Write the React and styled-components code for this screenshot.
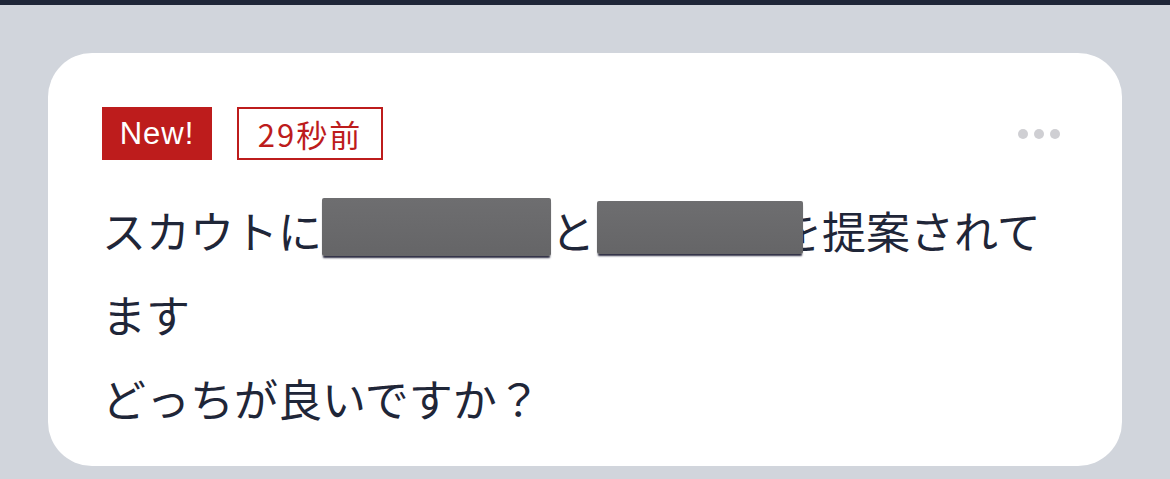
import styled, { createGlobalStyle } from "styled-components";

const GlobalStyle = createGlobalStyle`
  html, body {
    margin: 0;
    padding: 0;
    background: #d1d5dc;
  }
  body {
    font-family: "Noto Sans CJK JP", "Noto Sans", sans-serif;
  }
`;

const Page = styled.main`
  width: 1170px;
  height: 479px;
  background: #d1d5dc;
  border-top: 5px solid #1f2638;
  box-sizing: border-box;
  padding: 48px 48px 0 48px;
`;

const Card = styled.section`
  background: #ffffff;
  border-radius: 44px;
  height: 413px;
  box-sizing: border-box;
  padding: 54px 56px 0 54px;
`;

const Header = styled.div`
  display: flex;
  align-items: center;
  gap: 25px;
  height: 53px;
`;

const Tag = styled.span`
  display: inline-flex;
  align-items: center;
  justify-content: center;
  box-sizing: border-box;
  height: 53px;
  background: ${({ $filled }) => ($filled ? "#bd1c1c" : "#ffffff")};
  color: ${({ $filled }) => ($filled ? "#ffffff" : "#bd1c1c")};
  border: 2px solid #bd1c1c;
`;

const NewLabel = styled(Tag)`
  font-family: "Liberation Sans", Arial, sans-serif;
  font-size: 31px;
  letter-spacing: 1px;
  width: 110px;
`;

const TimeLabel = styled(Tag)`
  width: 146px;
  font-family: "Noto Sans CJK JP", sans-serif;
  font-size: 31px;
  letter-spacing: 2px;
`;

const More = styled.div`
  margin-left: auto;
  margin-right: 6px;
  display: flex;
  gap: 6px;
`;

const Dot = styled.span`
  width: 10px;
  height: 10px;
  border-radius: 50%;
  background: #cfcfd3;
`;

const Message = styled.p`
  margin: 28px 0 0 0;
  font-size: 44px;
  line-height: 84px;
  color: #1f2638;
`;

const Redacted = styled.span`
  display: inline-block;
  position: relative;
  vertical-align: middle;
  width: ${({ $w }) => $w}px;
  height: ${({ $h }) => $h}px;
  margin-left: ${({ $ml }) => $ml || 0}px;
  margin-right: ${({ $mr }) => $mr || 0}px;
  top: ${({ $t }) => $t || 0}px;
  background: linear-gradient(#6e6e70, #656567);
  border-radius: 2px;
  box-shadow: 0 3px 2px -1px #2a2a40;
`;

export default function App() {
  return (
    <>
      <GlobalStyle />
      <Page>
        <Card>
          <Header>
            <NewLabel $filled>New!</NewLabel>
            <TimeLabel>29秒前</TimeLabel>
            <More>
              <Dot />
              <Dot />
              <Dot />
            </More>
          </Header>
          <Message>
            スカウトに
            <Redacted $w={229} $h={58} $ml={0} $t={-10} />
            と
            <Redacted $w={206} $h={53} $ml={2} $mr={-25} $t={-10} />
            を提案されてます
            <br />
            どっちが良いですか？
          </Message>
        </Card>
      </Page>
    </>
  );
}
